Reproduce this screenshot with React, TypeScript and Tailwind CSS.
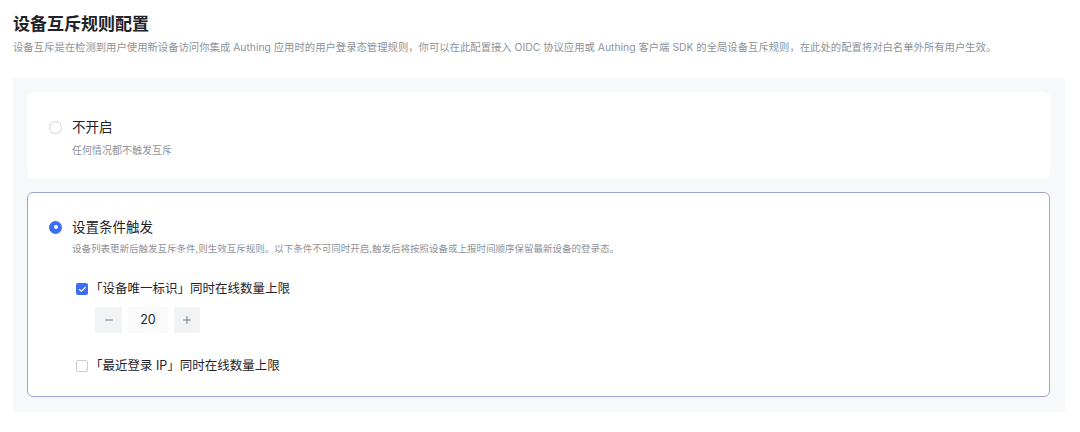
import React, { useState } from 'react';
import { Check, Minus, Plus } from 'lucide-react';

const FONT = "font-['Inter','Noto_Sans_CJK_SC',sans-serif]";

const Radio = ({ checked }: { checked: boolean }) =>
  checked ? (
    <span className="flex h-[13px] w-[13px] shrink-0 items-center justify-center rounded-full bg-[#3b6ef3]">
      <span className="h-[4px] w-[4px] rounded-full bg-white" />
    </span>
  ) : (
    <span className="h-[13px] w-[13px] shrink-0 rounded-full border border-[#cfd2d8] bg-white" />
  );

const CheckBox = ({ checked }: { checked: boolean }) =>
  checked ? (
    <span className="flex h-[12px] w-[12px] shrink-0 items-center justify-center rounded-[2px] bg-[#3b6ef3]">
      <Check size={9} strokeWidth={3} color="#fff" />
    </span>
  ) : (
    <span className="h-[12px] w-[12px] shrink-0 rounded-[2px] border border-[#c9cdd4] bg-white" />
  );

export default function App() {
  const [count, setCount] = useState(20);

  return (
    <div className={`${FONT} h-[432px] w-full bg-white pl-[13px] pr-[15px] pt-[12px] text-[#1f2329]`}>
      <h1 className="text-[17px] font-semibold leading-[24px]">设备互斥规则配置</h1>
      <p className="mt-[3px] text-[10.35px] leading-[16px] text-[#8f9399]">
        设备互斥是在检测到用户使用新设备访问你集成 Authing 应用时的用户登录态管理规则，你可以在此配置接入 OIDC 协议应用或 Authing 客户端 SDK 的全局设备互斥规则，在此处的配置将对白名单外所有用户生效。
      </p>

      <div className="mt-[23px] flex flex-col gap-[14px] bg-[#f7f8fa] pb-[15px] pl-[14px] pr-[15px] pt-[14px]">
        {/* option: off */}
        <div className="rounded-[6px] bg-white pb-[20px] pl-[22px] pt-[25px]">
          <div className="flex items-center gap-[10px]">
            <Radio checked={false} />
            <span className="text-[13.5px] leading-[20px]">不开启</span>
          </div>
          <p className="mt-[5px] pl-[23px] text-[10px] leading-[16px] text-[#8f9399]">任何情况都不触发互斥</p>
        </div>

        {/* option: conditional */}
        <div className="rounded-[6px] border border-[#a0a3d2] bg-white pb-[20px] pl-[21px] pt-[24px]">
          <div className="flex items-center gap-[10px]">
            <Radio checked />
            <span className="text-[13.5px] leading-[20px]">设置条件触发</span>
          </div>
          <p className="mt-[4px] pl-[23px] text-[9.5px] leading-[16px] text-[#8f9399]">
            设备列表更新后触发互斥条件,则生效互斥规则。以下条件不可同时开启,触发后将按照设备或上报时间顺序保留最新设备的登录态。
          </p>

          <div className="pl-[27px]">
            <div className="mt-[22px] flex items-center gap-[2px]">
              <CheckBox checked />
              <span className="text-[12.5px] leading-[20px]">「设备唯一标识」同时在线数量上限</span>
            </div>
            <div className="ml-[19px] mt-[8px] flex items-center gap-[6px]">
              <button
                className="flex h-[26px] w-[27px] items-center justify-center bg-[#f2f3f5] text-[#4e5969]"
                onClick={() => setCount(c => Math.max(0, c - 1))}
              >
                <Minus size={12} strokeWidth={1.5} />
              </button>
              <span className="flex h-[26px] w-[40px] items-center justify-center bg-[#fafafa] text-[12.5px] text-[#1f2329]">
                {count}
              </span>
              <button
                className="flex h-[26px] w-[26px] items-center justify-center bg-[#f2f3f5] text-[#4e5969]"
                onClick={() => setCount(c => c + 1)}
              >
                <Plus size={12} strokeWidth={1.5} />
              </button>
            </div>
            <div className="mt-[23px] flex items-center gap-[2px]">
              <CheckBox checked={false} />
              <span className="text-[12.5px] leading-[20px]">「最近登录 IP」同时在线数量上限</span>
            </div>
          </div>
        </div>
      </div>
    </div>
  );
}
